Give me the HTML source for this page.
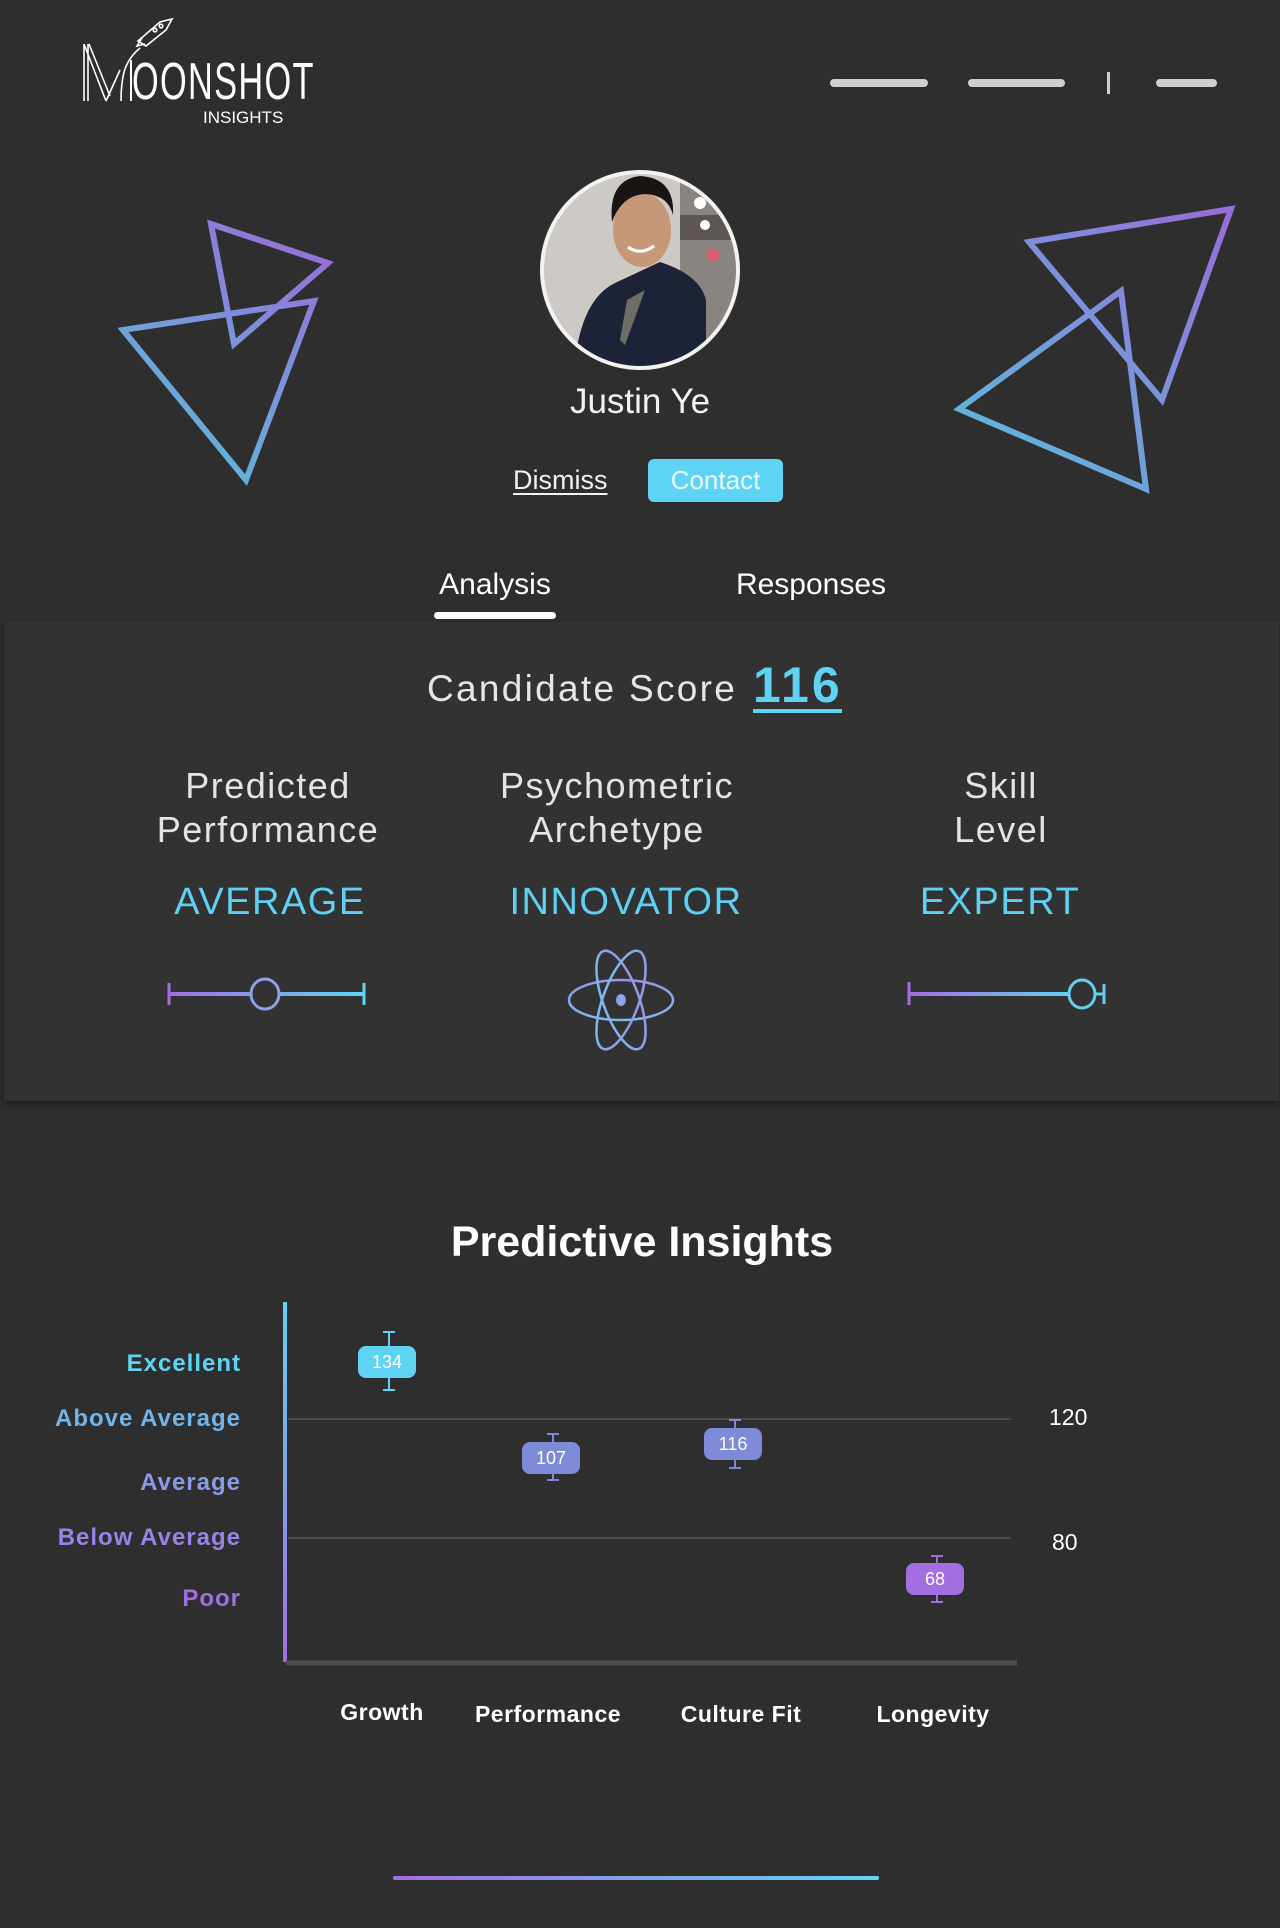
<!DOCTYPE html>
<html><head><meta charset="utf-8"><style>
*{margin:0;padding:0;box-sizing:border-box}
html,body{width:1280px;height:1928px;background:#2e2e2e;overflow:hidden;font-family:"Liberation Sans","DejaVu Sans",sans-serif;color:#eee}
.a{position:absolute;white-space:nowrap}
.c{transform:translateX(-50%)}
.card{position:absolute;left:4px;top:622px;width:1275px;height:479px;background:#323232;box-shadow:0 3px 6px rgba(0,0,0,.35)}
.bar{position:absolute;top:79px;height:8px;border-radius:4px;background:#cfcfcf}
.t{font-size:36px;letter-spacing:1.5px;color:#e4e4e4;text-align:center;line-height:44px}
.v{font-size:38px;color:#5fd0f2;letter-spacing:1.5px}
.yl{font-size:24px;font-weight:bold;text-align:right;right:1039px;letter-spacing:1px}
.xl{font-size:23px;font-weight:bold;color:#fff;letter-spacing:.5px}
</style></head><body>
<svg class="a" style="left:0;top:0" width="1280" height="1928">
<defs>
<linearGradient id="gL" gradientUnits="userSpaceOnUse" x1="320" y1="230" x2="140" y2="470"><stop offset="0" stop-color="#9a6cd8"/><stop offset="1" stop-color="#58bfdc"/></linearGradient>
<linearGradient id="gR" gradientUnits="userSpaceOnUse" x1="1230" y1="210" x2="960" y2="490"><stop offset="0" stop-color="#9a6cd8"/><stop offset="1" stop-color="#58bfdc"/></linearGradient>
<linearGradient id="g1" gradientUnits="userSpaceOnUse" x1="169" y1="0" x2="364" y2="0"><stop offset="0" stop-color="#a36ee0"/><stop offset="1" stop-color="#5fd6f5"/></linearGradient>
<linearGradient id="g2" gradientUnits="userSpaceOnUse" x1="909" y1="0" x2="1082" y2="0"><stop offset="0" stop-color="#a36ee0"/><stop offset="1" stop-color="#5fd6f5"/></linearGradient>
<linearGradient id="g3" gradientUnits="userSpaceOnUse" x1="393" y1="0" x2="879" y2="0"><stop offset="0" stop-color="#a36ee0"/><stop offset="1" stop-color="#5fd6f5"/></linearGradient>
<linearGradient id="gv" gradientUnits="userSpaceOnUse" x1="0" y1="1301" x2="0" y2="1662"><stop offset="0" stop-color="#5fd3f2"/><stop offset="1" stop-color="#a36ee0"/></linearGradient>
<linearGradient id="ga" gradientUnits="userSpaceOnUse" x1="0" y1="952" x2="0" y2="1048"><stop offset="0" stop-color="#a77ee0"/><stop offset="1" stop-color="#6dd2f2"/></linearGradient>
<clipPath id="av"><circle cx="640" cy="270" r="96"/></clipPath>
</defs>
<g stroke="#fff" stroke-width="1.6" fill="none">
<path d="M138 41 L160 22 L172 19 L166 30 L146 46 Z"/><circle cx="155" cy="30" r="1.8"/><circle cx="161" cy="26" r="1.8"/>
<path d="M142 38 L137 46 L145 44"/>
<path d="M140 48 Q128 58 124 72 Q121 84 121 101"/>
<path d="M84 44 L84 101 M88 44 L88 101 M84 44 L106 101 M89 44 L110 96 M106 101 L120 70"/>
<path d="M131 60 L131 101" stroke-width="2"/>
</g>
<g fill="none" stroke-width="6">
<polygon points="211,224 328,263 234,344" stroke="url(#gL)"/>
<polygon points="123,330 314,301 246,480" stroke="url(#gL)"/>
<polygon points="1029,242 1231,209 1162,400" stroke="url(#gR)"/>
<polygon points="959,409 1121,291 1146,489" stroke="url(#gR)"/>
</g>
<circle cx="640" cy="270" r="100" fill="#f2f2f2"/>
<g clip-path="url(#av)">
<rect x="540" y="170" width="200" height="200" fill="#cdc9c4"/>
<rect x="680" y="170" width="60" height="200" fill="#8a8480"/>
<rect x="680" y="215" width="60" height="25" fill="#5c5552"/>
<circle cx="700" cy="203" r="6" fill="#fff"/><circle cx="705" cy="225" r="5" fill="#fff"/><circle cx="713" cy="255" r="6" fill="#e05a70"/>
<path d="M574 370 Q580 300 615 283 L660 262 Q700 275 706 300 L706 370 Z" fill="#1d2336"/>
<path d="M627 300 L645 290 L625 345 L620 340Z" fill="#6e6e66"/>
<ellipse cx="642" cy="230" rx="29" ry="37" fill="#c79878"/>
<path d="M612 222 Q608 180 640 176 Q675 178 673 215 Q668 195 645 194 Q622 195 612 222Z" fill="#1a1514"/>
<path d="M628 247 Q640 256 654 246" stroke="#fff" stroke-width="3" fill="none"/>
</g>
</svg>
<div class="a" style="left:132px;top:52px;font-size:52px;color:#fff;transform:scaleX(.66);transform-origin:left;letter-spacing:2px">OONSHOT</div>
<div class="a" style="left:203px;top:108px;font-size:17px;color:#fff">INSIGHTS</div>
<div class="bar" style="left:830px;width:98px"></div>
<div class="bar" style="left:968px;width:97px"></div>
<div class="a" style="left:1107px;top:72px;width:3px;height:22px;background:#cfcfcf"></div>
<div class="bar" style="left:1156px;width:61px"></div>

<div class="a c" style="left:640px;top:382px;font-size:35px;color:#f2f2f2">Justin Ye</div>
<div class="a" style="left:513px;top:465px;font-size:27px;color:#f2f2f2;text-decoration:underline;text-underline-offset:4px">Dismiss</div>
<div class="a" style="left:648px;top:459px;width:135px;height:43px;border-radius:6px;background:#5fd3f4;color:#eafaff;font-size:26px;text-align:center;line-height:43px">Contact</div>

<div class="a c" style="left:495px;top:568px;font-size:30px;color:#fff">Analysis</div>
<div class="a" style="left:434px;top:612px;width:122px;height:7px;border-radius:4px;background:#fff"></div>
<div class="a c" style="left:811px;top:568px;font-size:30px;color:#fff">Responses</div>

<div class="card"></div>
<div class="a" style="left:427px;top:668px;font-size:37px;letter-spacing:2.3px;color:#e6e6e6">Candidate Score</div>
<div class="a" style="left:753px;top:656px;font-size:50px;font-weight:bold;color:#5fd3f4;letter-spacing:3px">116</div>
<div class="a" style="left:753px;top:709px;width:89px;height:4px;background:#5fd3f4"></div>

<div class="a c t" style="left:268px;top:764px">Predicted<br>Performance</div>
<div class="a c t" style="left:617px;top:764px">Psychometric<br>Archetype</div>
<div class="a c t" style="left:1001px;top:764px">Skill<br>Level</div>
<div class="a c v" style="left:270px;top:881px">AVERAGE</div>
<div class="a c v" style="left:626px;top:881px">INNOVATOR</div>
<div class="a c v" style="left:1000px;top:881px">EXPERT</div>

<svg class="a" style="left:0;top:0" width="1280" height="1928">
<g fill="none" stroke-width="3">
<line x1="169" y1="994" x2="364" y2="994" stroke="url(#g1)" stroke-width="4"/>
<line x1="169" y1="983" x2="169" y2="1005" stroke="#a36ee0"/><line x1="364" y1="983" x2="364" y2="1005" stroke="#5fd6f5"/>
<ellipse cx="265" cy="994" rx="14" ry="15" fill="#323232" stroke="#8fa0ea"/>
<line x1="909" y1="994" x2="1082" y2="994" stroke="url(#g2)" stroke-width="4"/>
<line x1="909" y1="982" x2="909" y2="1005" stroke="#a36ee0"/>
<ellipse cx="1082" cy="994" rx="13" ry="14" fill="#323232" stroke="#64cfef"/>
<line x1="1096" y1="994" x2="1104" y2="994" stroke="#64cfef"/><line x1="1104" y1="984" x2="1104" y2="1004" stroke="#64cfef"/>
<g stroke="url(#ga)" stroke-width="2.5">
<ellipse cx="621" cy="1000" rx="52" ry="20"/>
<ellipse cx="621" cy="1000" rx="52" ry="18" transform="rotate(70 621 1000)"/>
<ellipse cx="621" cy="1000" rx="52" ry="18" transform="rotate(110 621 1000)"/>
</g>
<ellipse cx="621" cy="1000" rx="5" ry="6" fill="#90a0ea" stroke="none"/>
</g>
<line x1="285" y1="1302" x2="285" y2="1662" stroke="url(#gv)" stroke-width="4"/>
<line x1="288" y1="1419" x2="1011" y2="1419" stroke="#4a4a4a" stroke-width="2"/>
<line x1="288" y1="1538" x2="1011" y2="1538" stroke="#4a4a4a" stroke-width="2"/>
<line x1="286" y1="1663" x2="1017" y2="1663" stroke="#4d4d4d" stroke-width="5"/>
<g stroke-width="2">
<g stroke="#5fd3f2"><line x1="389" y1="1332" x2="389" y2="1390"/><line x1="383" y1="1332" x2="395" y2="1332"/><line x1="383" y1="1390" x2="395" y2="1390"/></g>
<g stroke="#7d8ad8"><line x1="553" y1="1434" x2="553" y2="1480"/><line x1="547" y1="1434" x2="559" y2="1434"/><line x1="547" y1="1480" x2="559" y2="1480"/>
<line x1="735" y1="1420" x2="735" y2="1468"/><line x1="729" y1="1420" x2="741" y2="1420"/><line x1="729" y1="1468" x2="741" y2="1468"/></g>
<g stroke="#9e6fe0"><line x1="937" y1="1556" x2="937" y2="1602"/><line x1="931" y1="1556" x2="943" y2="1556"/><line x1="931" y1="1602" x2="943" y2="1602"/></g>
</g>
<rect x="393" y="1876" width="486" height="4" rx="2" fill="url(#g3)"/>
</svg>
<div class="a" style="left:358px;top:1346px;width:58px;height:32px;border-radius:8px;background:#5fd3f2;color:#fff;font-size:18px;text-align:center;line-height:32px">134</div>
<div class="a" style="left:522px;top:1442px;width:58px;height:32px;border-radius:8px;background:#7d8ad8;color:#fff;font-size:18px;text-align:center;line-height:32px">107</div>
<div class="a" style="left:704px;top:1428px;width:58px;height:32px;border-radius:8px;background:#7d8ad8;color:#fff;font-size:18px;text-align:center;line-height:32px">116</div>
<div class="a" style="left:906px;top:1563px;width:58px;height:32px;border-radius:8px;background:#a36ee0;color:#fff;font-size:18px;text-align:center;line-height:32px">68</div>

<div class="a c" style="left:642px;top:1218px;font-size:43px;font-weight:bold;color:#fff">Predictive Insights</div>
<div class="a yl" style="top:1350px;color:#5fd3f2">Excellent</div>
<div class="a yl" style="top:1405px;color:#6fb4ea">Above Average</div>
<div class="a yl" style="top:1469px;color:#8a9ae8">Average</div>
<div class="a yl" style="top:1524px;color:#9a82e6">Below Average</div>
<div class="a yl" style="top:1585px;color:#a36ee0">Poor</div>
<div class="a" style="left:1049px;top:1404px;font-size:23px;color:#fff">120</div>
<div class="a" style="left:1052px;top:1529px;font-size:23px;color:#fff">80</div>
<div class="a c xl" style="left:382px;top:1699px">Growth</div>
<div class="a c xl" style="left:548px;top:1701px">Performance</div>
<div class="a c xl" style="left:741px;top:1701px">Culture Fit</div>
<div class="a c xl" style="left:933px;top:1701px">Longevity</div>
</body></html>
